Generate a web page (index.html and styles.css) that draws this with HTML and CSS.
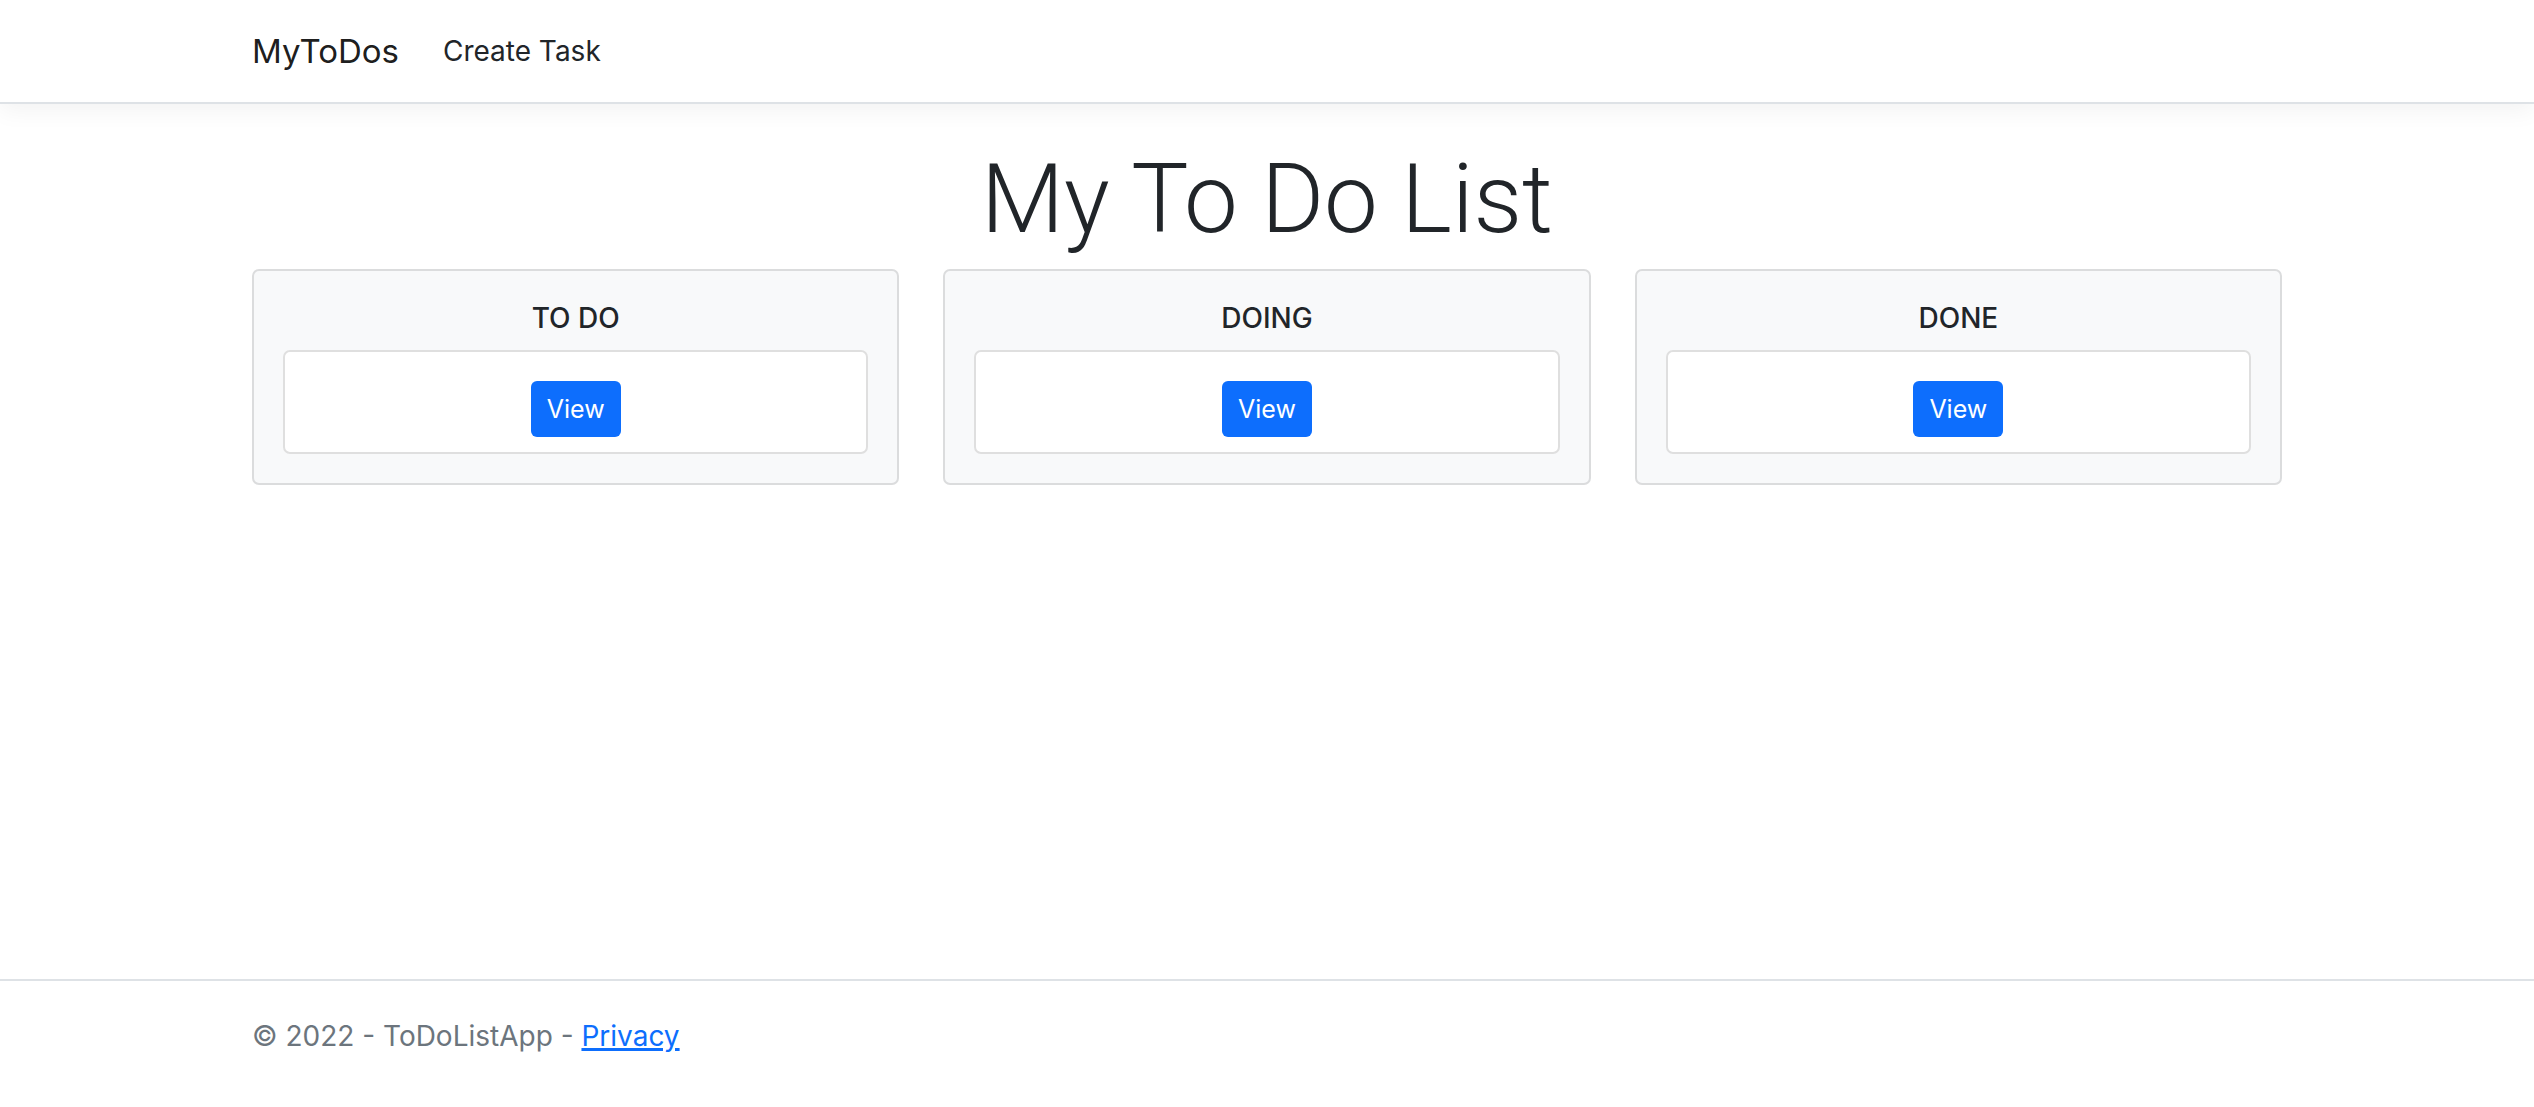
FILE: index.html
```html
<!DOCTYPE html>
<html lang="en">
<head>
  <meta charset="utf-8">
  <meta name="viewport" content="width=device-width, initial-scale=1">
  <title>MyToDos</title>
  <link rel="stylesheet" href="styles.css">
</head>
<body>
  <header class="site-header">
    <nav class="container navbar">
      <a class="brand" href="#">MyToDos</a>
      <a class="nav-link" href="#">Create Task</a>
    </nav>
  </header>
  <main class="container main">
    <h1 class="title">My To Do List</h1>
    <div class="board">
      <section class="column">
        <h2 class="column-title">TO DO</h2>
        <div class="task"><button class="btn" type="button">View</button></div>
      </section>
      <section class="column">
        <h2 class="column-title">DOING</h2>
        <div class="task"><button class="btn" type="button">View</button></div>
      </section>
      <section class="column">
        <h2 class="column-title">DONE</h2>
        <div class="task"><button class="btn" type="button">View</button></div>
      </section>
    </div>
  </main>
  <footer class="site-footer">
    <div class="container">© 2022 - ToDoListApp - <a class="footer-link" href="#">Privacy</a></div>
  </footer>
</body>
</html>
```
FILE: styles.css
```css
* {
  box-sizing: border-box;
}

body {
  display: flex;
  flex-direction: column;
  min-height: 100vh;
  margin: 0;
  background: #fff;
  color: #212529;
  font-family: Inter, "Liberation Sans", sans-serif;
  font-size: 28px;
  line-height: 44px;
}

.container {
  width: 100%;
  max-width: 2078px;
  margin: 0 auto;
  padding: 0 24px;
}

.site-header {
  padding: 22px 0;
  border-bottom: 2px solid #dee2e6;
  box-shadow: 0 7px 22px rgba(0, 0, 0, 0.05);
}

.navbar {
  display: flex;
  align-items: center;
  gap: 44px;
  line-height: 58px;
}

.brand {
  color: rgba(0, 0, 0, 0.9);
  font-size: 33px;
  text-decoration: none;
}

.nav-link {
  color: #212529;
  text-decoration: none;
}

.main {
  flex: 1;
  padding-top: 34px;
}

.title {
  margin: 0 0 9px;
  font-family: Roboto, "Liberation Sans", sans-serif;
  font-size: 96px;
  font-weight: 300;
  line-height: 122px;
  text-align: center;
}

.board {
  display: grid;
  grid-template-columns: repeat(auto-fit, minmax(320px, 1fr));
  gap: 44px;
}

.column {
  padding: 29px;
  border: 2px solid #dbdcdd;
  border-radius: 7px;
  background: #f8f9fa;
  text-align: center;
}

.column-title {
  margin: 0 0 13px;
  font-size: 28px;
  font-weight: 500;
  line-height: 37px;
}

.task {
  display: flex;
  justify-content: center;
  padding: 29px 29px 15px;
  border: 2px solid #dfdfdf;
  border-radius: 7px;
  background: #fff;
}

.btn {
  padding: 9px 16px;
  border: 0;
  border-radius: 6px;
  background: #0d6efd;
  color: #fff;
  font-family: inherit;
  font-size: 25px;
  line-height: 38px;
}

.site-footer {
  padding: 33px 0 49px;
  border-top: 2px solid #dee2e6;
  color: #6c757d;
}

.footer-link {
  color: #0d6efd;
  text-decoration-thickness: 3px;
}
```
